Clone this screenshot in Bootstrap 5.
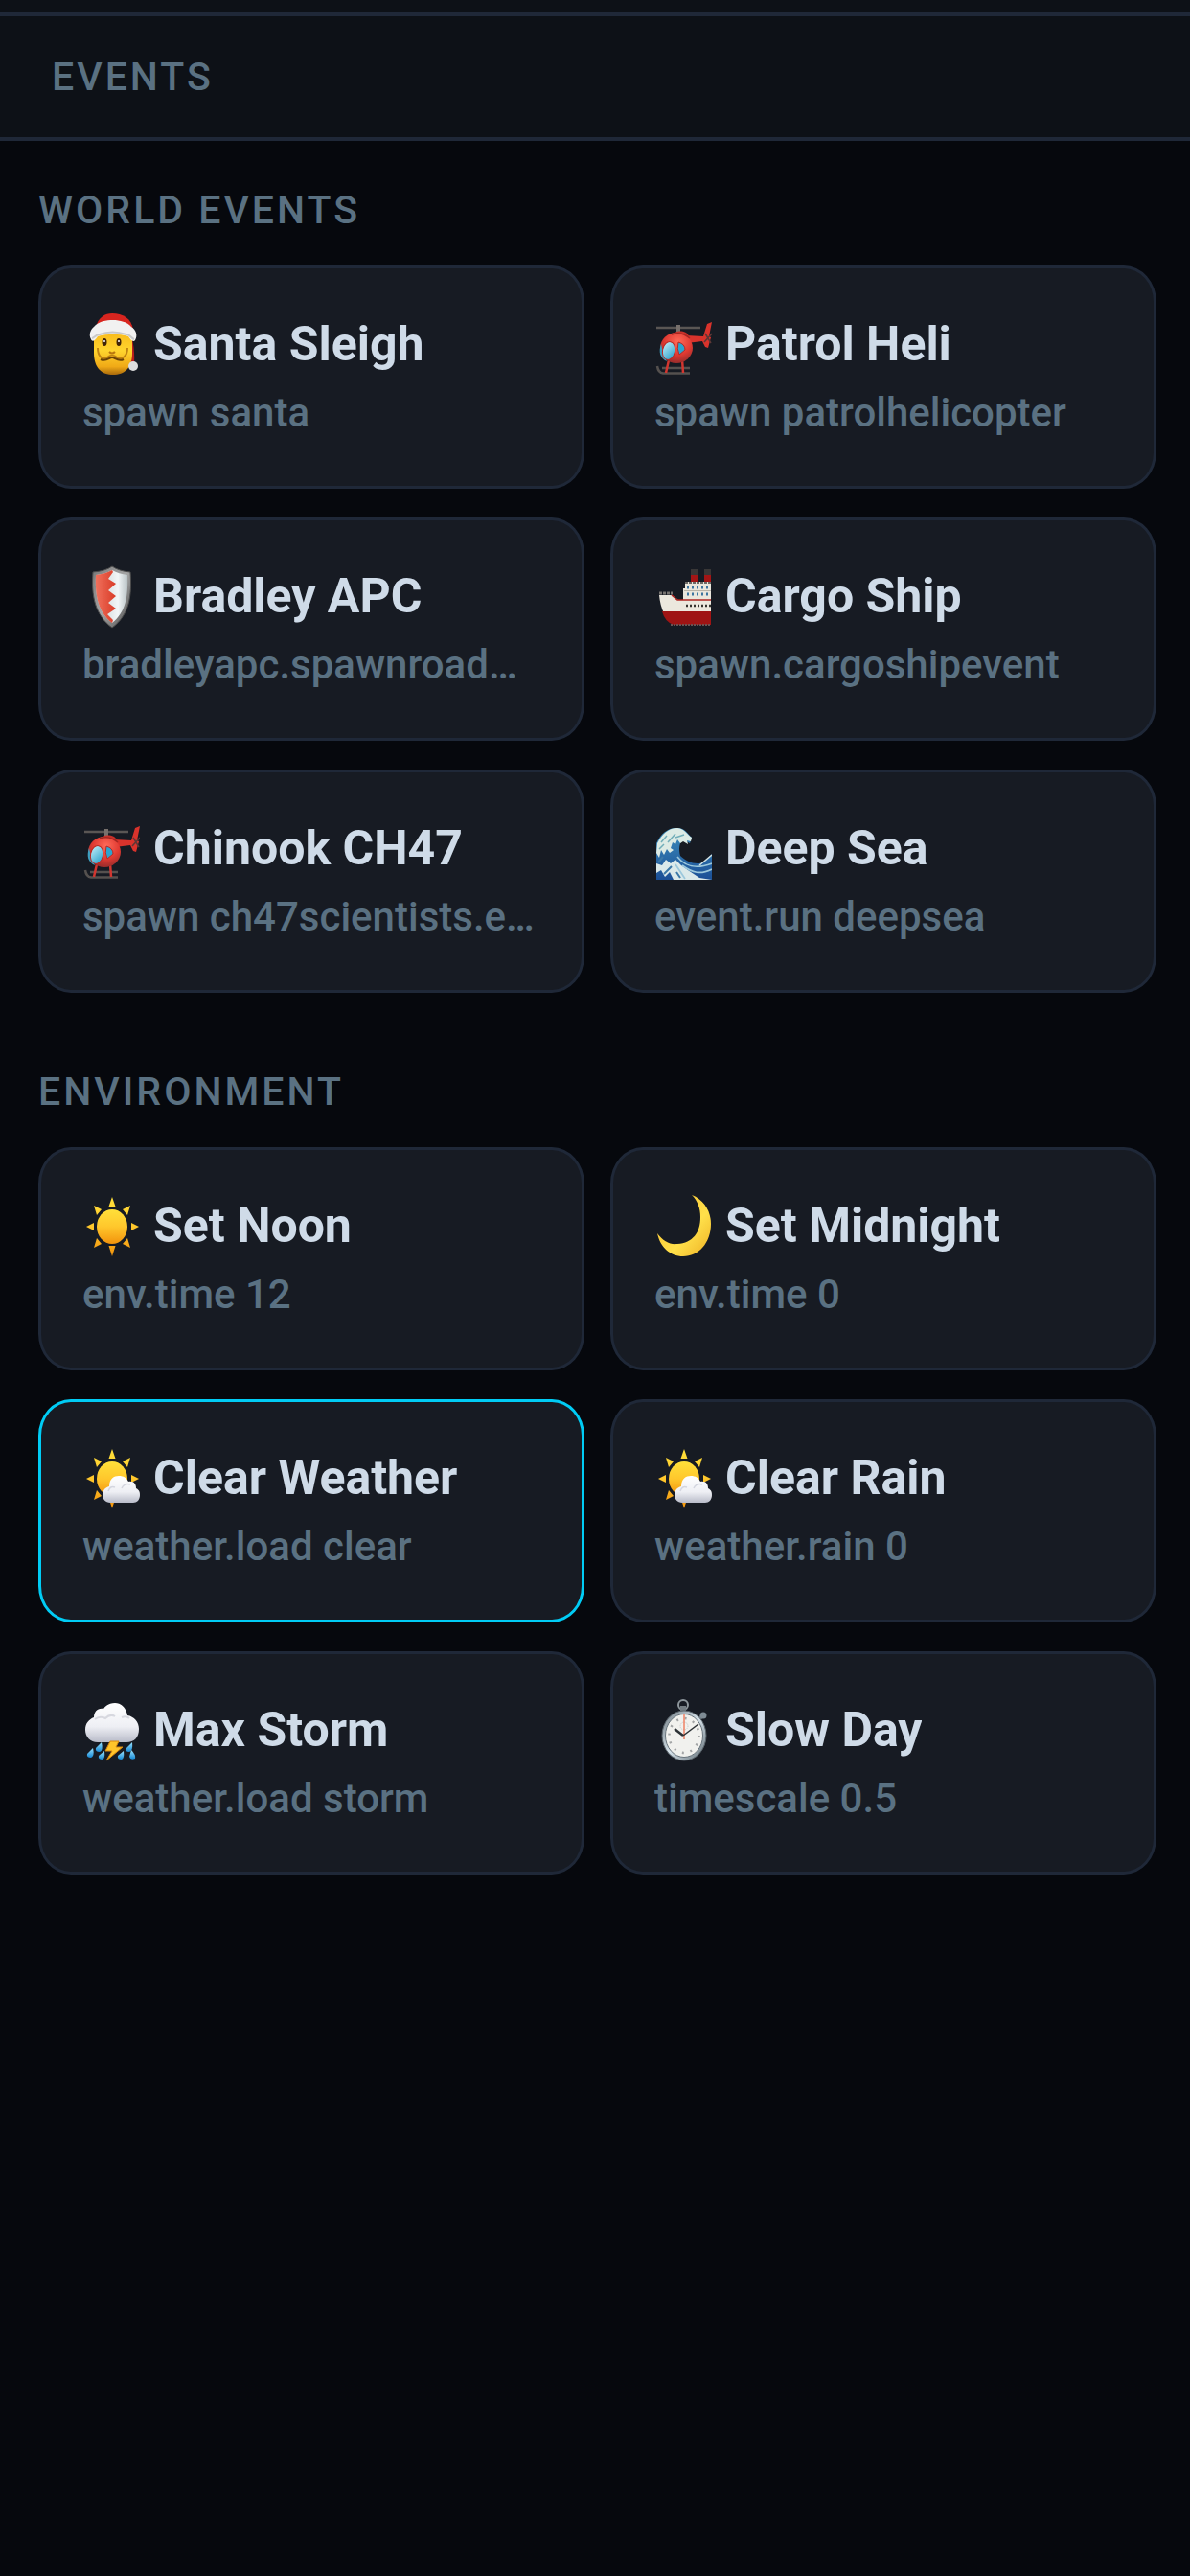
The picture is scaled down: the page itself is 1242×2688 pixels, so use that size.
<!DOCTYPE html>
<html lang="en">
<head>
<meta charset="utf-8">
<meta name="viewport" content="width=device-width, initial-scale=1">
<title>Events</title>
<link href="https://cdn.jsdelivr.net/npm/bootstrap@5.3.0/dist/css/bootstrap.min.css" rel="stylesheet">
<style>
  :root { --page: #06080d; --bar: #0d1117; --panel: #171b23; --line: #1f2838; --ink: #cfdbe8; --dim: #5a7182; --accent: #00ccf5; }
  body { background: var(--page); color: var(--ink); font-family: Roboto, "Liberation Sans", sans-serif; }
  .top-edge { height: 13px; background: var(--bar); }
  .title-bar { background: var(--bar); border-top: 4px solid var(--line); border-bottom: 4px solid var(--line); padding: 38px 54px; }
  .caps { color: var(--dim); font-size: 41px; line-height: 50px; font-weight: 500; letter-spacing: 3px; text-transform: uppercase; margin: 0; }
  .content { padding: 47px 35px 47px 40px; }
  .group + .group { margin-top: 78px; }
  .group .caps { margin-bottom: 33px; }
  .tiles { grid-template-columns: repeat(2, minmax(0, 1fr)); gap: 30px 27px; }
  .tile { background: var(--panel); border: 3px solid var(--line); border-radius: 34px / 38px; padding: 44px 43px 47px; color: var(--ink); text-align: left; }
  .tile.active { border-color: var(--accent); }
  .tile-name { gap: 14px; height: 70px; font-size: 50px; line-height: 70px; font-weight: 700; }
  .tile-name svg { width: 60px; height: 70px; flex: none; }
  .tile-cmd { color: var(--dim); font-size: 42px; line-height: 58px; font-weight: 500; margin-top: 8px; }
</style>
</head>
<body>
<svg class="position-absolute" width="0" height="0" aria-hidden="true">
  <defs>
    <linearGradient id="gSun" x1="0" y1="0" x2="0" y2="1"><stop offset="0" stop-color="#ffe03a"/><stop offset=".5" stop-color="#ffc72c"/><stop offset="1" stop-color="#f2930c"/></linearGradient>
    <linearGradient id="gFace" x1="0" y1="0" x2="0" y2="1"><stop offset="0" stop-color="#f9bd1d"/><stop offset=".4" stop-color="#ffd42e"/><stop offset=".8" stop-color="#f0a916"/><stop offset="1" stop-color="#a8690c"/></linearGradient>
    <radialGradient id="gHeli" cx=".55" cy=".3" r=".75"><stop offset="0" stop-color="#ff6a58"/><stop offset=".55" stop-color="#e03a32"/><stop offset="1" stop-color="#8e2a2a"/></radialGradient>
    <linearGradient id="gGlass" x1="0" y1="0" x2="1" y2="1"><stop offset="0" stop-color="#c9f2fb"/><stop offset="1" stop-color="#1f9cc7"/></linearGradient>
    <linearGradient id="gSteel" x1="0" y1="0" x2="1" y2="1"><stop offset="0" stop-color="#777"/><stop offset=".5" stop-color="#a5a5a5"/><stop offset="1" stop-color="#4c4c4c"/></linearGradient>
    <linearGradient id="gWhite" x1="0" y1="0" x2="1" y2="0"><stop offset="0" stop-color="#c4cacc"/><stop offset=".7" stop-color="#f2f6f7"/><stop offset="1" stop-color="#b9c2c5"/></linearGradient>
    <linearGradient id="gRed" x1="0" y1="0" x2="1" y2="0"><stop offset="0" stop-color="#f0705c"/><stop offset="1" stop-color="#d93c28"/></linearGradient>
    <linearGradient id="gCloud" x1="0" y1="0" x2="0" y2="1"><stop offset="0" stop-color="#ffffff"/><stop offset=".6" stop-color="#eeeff4"/><stop offset="1" stop-color="#b9bcc9"/></linearGradient>
    <linearGradient id="gDrop" x1="0" y1="0" x2="0" y2="1"><stop offset="0" stop-color="#9be4ff"/><stop offset="1" stop-color="#1487d4"/></linearGradient>
    <linearGradient id="gMoon" x1="0" y1="0" x2="1" y2="1"><stop offset="0" stop-color="#f6b92a"/><stop offset=".6" stop-color="#ffe04a"/><stop offset="1" stop-color="#eeb024"/></linearGradient>
    <linearGradient id="gWave" x1="0" y1="0" x2="0" y2="1"><stop offset="0" stop-color="#3d8fbd"/><stop offset="1" stop-color="#1b4f96"/></linearGradient>
    <linearGradient id="gRim" x1="0" y1="0" x2="1" y2="1"><stop offset="0" stop-color="#6d7880"/><stop offset=".5" stop-color="#d6e2ea"/><stop offset="1" stop-color="#5b6870"/></linearGradient>
  </defs>

  <symbol id="santa" viewBox="0 0 60 70">
    <path d="M46 16C52 24 55 40 54 56L49 56 46 30Z" fill="#b81d1b"/>
    <path d="M12 25H52V44C52 60 44 67 32 67S12 60 12 44Z" fill="url(#gFace)"/>
    <path d="M14 18C16 7 24 3 31 3 42 3 51 8 53 20Z" fill="#d8251f"/>
    <path d="M9 30C6 25 9 19 12 17 17 11 25 10 32 10S47 12 51 17C56 20 58 26 55 31 53 34 50 30 48 27 38 24 26 24 16 27 13 32 10 33 9 30Z" fill="#f1f1f1"/>
    <path d="M10 29C13 28 14 25 18 25 28 21 37 22 46 25 50 25 51 29 54 30" fill="none" stroke="#c9c9c9" stroke-width="2"/>
    <ellipse cx="23" cy="33" rx="2.5" ry="4" fill="#402308"/><ellipse cx="38" cy="33" rx="2.5" ry="4" fill="#402308"/>
    <circle cx="23" cy="32" r="1" fill="#fff"/><circle cx="38" cy="32" r="1" fill="#fff"/>
    <path d="M28 43Q31 46 34 43" fill="none" stroke="#b9770e" stroke-width="2"/>
    <path d="M16 39C16 48 21 52 26 49 29 46 33 46 36 49 42 52 47 47 47 39" fill="none" stroke="#c08312" stroke-width="2"/>
    <path d="M19 51C25 54 28 49 31 49S37 54 43 51" fill="none" stroke="#6b4206" stroke-width="2"/>
    <ellipse cx="53" cy="58" rx="5" ry="5" fill="#dedede"/>
  </symbol>

  <symbol id="heli" viewBox="0 0 60 70">
    <path d="M2 18H48" stroke="#5a5654" stroke-width="2.5"/>
    <path d="M25 15V25" stroke="#77706c" stroke-width="4"/>
    <path d="M8 60H37M3 58Q4 65 9 65.500H37" fill="none" stroke="#55514f" stroke-width="2.500"/>
    <path d="M15 52 12 65M29 51 30 65" stroke="#d2362f" stroke-width="2.500"/>
    <path d="M33 26 51 27 55 14 60 12 57 27 59 28 56 39 53 38 50 32 34 34Z" fill="#d9332c"/>
    <path d="M52 33 60 24M53 24 59 34" stroke="#5d3836" stroke-width="1.500"/>
    <path d="M20 25C21 20 34 20 36 27Z" fill="#c93029"/>
    <ellipse cx="23" cy="39" rx="17" ry="16" fill="url(#gHeli)"/>
    <path d="M18 25Q28 21 37 29" fill="none" stroke="#a32722" stroke-width="1.500"/>
    <path d="M7 35C4 43 6 50 13 53L9 44Z" fill="#3c9fc0"/>
    <ellipse cx="15" cy="42" rx="6.500" ry="9.500" transform="rotate(12 15 42)" fill="url(#gGlass)" stroke="#b92822"/>
    <path d="M25 33Q32 35 32 41L26 46Q23 40 25 33Z" fill="#2aa4cf" stroke="#b92822"/>
  </symbol>

  <symbol id="shield" viewBox="0 0 60 70">
    <path d="M31 4Q38 9 50 10C52 34 49 55 31 68 13 55 9 34 11 10Q24 9 31 4Z" fill="url(#gSteel)" stroke="#4b4b4b"/>
    <path d="M31 8Q38 12 47 13C48 36 45 52 31 63 17 52 13 36 14 13Q24 12 31 8Z" fill="url(#gWhite)"/>
    <path d="M31 8Q24 12 14 13C13 36 17 52 31 63L32 60 26 54 35 48 27 42 35 35 27 29 35 22 27 17 32 10Z" fill="url(#gRed)"/>
  </symbol>

  <symbol id="ship" viewBox="0 0 60 70">
    <path d="M38 12H46V21H38ZM52 12H59V21H52Z" fill="#a31515"/>
    <path d="M38 7H46V13H38ZM52 7H59V13H52Z" fill="#393737"/>
    <path d="M32 20H59V42H30V27H32Z" fill="#e9e6dc"/>
    <path d="M32 21H59" stroke="#6b6a66" stroke-width="2" stroke-dasharray="3 1"/>
    <path d="M34 26H59M34 33H59" stroke="#3c759f" stroke-width="3" stroke-dasharray="2 3"/>
    <path d="M31 29.500H59" stroke="#b9b4a8"/>
    <path d="M5 34H18L25 39H59V53H10Q6 45 5 34Z" fill="#ece8de"/>
    <path d="M5 32H19" stroke="#777370" stroke-width="3" stroke-dasharray="3 1"/>
    <path d="M18 34 24 39H59" fill="none" stroke="#b02420" stroke-width="1.500"/>
    <path d="M33 45H59" stroke="#35332f" stroke-width="2.500" stroke-dasharray="2 2"/>
    <path d="M8 51H59V65H20Q11 62 8 51Z" fill="#9f1414"/>
    <path d="M17 65H59" stroke="#6a5252" stroke-width="2" stroke-dasharray="2 1"/>
  </symbol>

  <symbol id="wave" viewBox="0 0 60 70">
    <path d="M2 30C7 19 15 13 25 14 33 15 35 21 39 24L37 30 30 26C26 29 25 36 27 43 33 49 45 54 52 49L60 41V68H2Z" fill="url(#gWave)"/>
    <path d="M3 30C8 20 15 14 24 14 32 15 34 21 39 24L38 28 34 27 35 31 30 28 27 30 24 26 22 31 19 29 17 35 20 37 16 40 13 36 10 42 7 37 5 45 2 40Z" fill="#dcebe5"/>
    <path d="M7 29 13 22M14 29 22 20M22 24 31 21M5 36 10 31" stroke="#71aeb9" stroke-width="1.500"/>
    <path d="M2 51 8 53 12 47 17 51 22 47 28 53 35 58 47 66 60 68H20L16 60 11 65 7 58 2 61Z" fill="#dbe9ea"/>
    <path d="M24 44C31 53 41 58 60 51M29 53C40 61 48 63 60 57M22 52 32 67" fill="none" stroke="#9cc8dc" stroke-width="1.700"/>
    <path d="M4 50 9 44M10 62 18 54M23 60 27 66" stroke="#3b78a8" stroke-width="2"/>
    <path d="M47 53 60 42" stroke="#d2e2e2" stroke-width="1.500"/>
  </symbol>

  <symbol id="sun" viewBox="0 0 60 70">
    <path d="M31 5 34.500 15H27.500ZM31 67 27.500 56H34.500ZM4 36 12 32V40ZM59 36 51 32V40ZM12 14 20 18 15 24ZM50 14 42 18 47 24ZM12 58 20 54 15 48ZM50 58 42 54 47 48Z" fill="url(#gSun)"/>
    <ellipse cx="31" cy="36" rx="16" ry="18" fill="url(#gSun)"/>
  </symbol>

  <symbol id="suncloud" viewBox="0 0 60 70">
    <use href="#sun"/>
    <path d="M29 61C24 61 21 57 21 53 21 48 24 45 28 44 28 36 33 33 38 33 43 33 46 35 48 39 54 38 56 42 56 46 60 48 60 51 60 53 60 58 57 61 53 61Z" fill="url(#gCloud)"/>
    <path d="M27 49Q29 43 34 45M41 46Q44 40 50 42" fill="none" stroke="#d4d6df" stroke-width="1.500"/>
  </symbol>

  <symbol id="moon" viewBox="0 0 60 70">
    <path d="M39 3C52 8 59 20 59 33 59 53 46 67 30 67 16 67 6 57 3 43 9 51 16 55 24 54 40 53 48 42 48 26 48 17 45 9 39 3Z" fill="url(#gMoon)"/>
  </symbol>

  <symbol id="storm" viewBox="0 0 60 70">
    <path d="M16 48C8 48 3 42 3 35 3 28 7 24 12 22 12 16 16 12 22 13 25 9 29 7 34 7 41 7 46 13 47 20 54 21 59 27 59 34 59 43 54 48 46 48Z" fill="url(#gCloud)"/>
    <path d="M13 24Q18 20 24 23 29 18 34 21M41 22Q46 20 49 23" fill="none" stroke="#d7d8df" stroke-width="2"/>
    <path d="M29 47H38L35 53H42L25 67 31 57H24Z" fill="#ffc42a" stroke="#d8860e"/>
    <g fill="url(#gDrop)">
      <path d="M11 54Q13 62 9 64 4 64 5 60Z"/><path d="M20 48Q22 57 18 58 13 58 14 54Z"/><path d="M23 57Q24 65 21 66 16 66 17 62Z"/>
      <path d="M43 57Q44 65 41 66 36 66 37 62Z"/><path d="M52 48Q53 57 49 58 44 58 46 54Z"/><path d="M51 56Q56 61 55 65 50 67 49 63Z"/>
    </g>
  </symbol>

  <symbol id="watch" viewBox="0 0 60 70">
    <ellipse cx="30" cy="9" rx="5" ry="5" fill="none" stroke="#8d969b" stroke-width="2"/>
    <path d="M27 10H33V17H27Z" fill="#737c82"/>
    <path d="M45 25 51 20" stroke="#67717a" stroke-width="4"/><circle cx="51" cy="20" r="3.500" fill="#7e8b94"/>
    <ellipse cx="31" cy="41" rx="23" ry="26" fill="url(#gRim)" stroke="#59636a"/>
    <ellipse cx="31" cy="41" rx="19.500" ry="22.500" fill="#f1f1ee" stroke="#68747c"/>
    <ellipse cx="31" cy="41" rx="15.500" ry="18" fill="none" stroke="#a3a5a6" stroke-width="2.500" stroke-dasharray="2 6.800"/>
    <circle cx="31" cy="31" r="4" fill="none" stroke="#c3c5c6" stroke-dasharray="1 1"/>
    <path d="M31 19V45" stroke="#ef8064" stroke-width="1.500"/>
    <path d="M30 41 21 34" stroke="#2d3236" stroke-width="2.500"/><path d="M30 41 46 29" stroke="#2d3236" stroke-width="1.500"/>
  </symbol>
</svg>

<div class="top-edge"></div>
<header class="title-bar"><h1 class="caps">Events</h1></header>

<main class="content">
  <section class="group">
    <h2 class="caps">World Events</h2>
    <div class="tiles d-grid">
      <button type="button" class="tile"><span class="tile-name d-flex"><svg aria-hidden="true"><use href="#santa"/></svg><span class="text-truncate">Santa Sleigh</span></span><span class="tile-cmd d-block text-truncate">spawn santa</span></button>
      <button type="button" class="tile"><span class="tile-name d-flex"><svg aria-hidden="true"><use href="#heli"/></svg><span class="text-truncate">Patrol Heli</span></span><span class="tile-cmd d-block text-truncate">spawn patrolhelicopter</span></button>
      <button type="button" class="tile"><span class="tile-name d-flex"><svg aria-hidden="true"><use href="#shield"/></svg><span class="text-truncate">Bradley APC</span></span><span class="tile-cmd d-block text-truncate">bradleyapc.spawnroad…</span></button>
      <button type="button" class="tile"><span class="tile-name d-flex"><svg aria-hidden="true"><use href="#ship"/></svg><span class="text-truncate">Cargo Ship</span></span><span class="tile-cmd d-block text-truncate">spawn.cargoshipevent</span></button>
      <button type="button" class="tile"><span class="tile-name d-flex"><svg aria-hidden="true"><use href="#heli"/></svg><span class="text-truncate">Chinook CH47</span></span><span class="tile-cmd d-block text-truncate">spawn ch47scientists.e…</span></button>
      <button type="button" class="tile"><span class="tile-name d-flex"><svg aria-hidden="true"><use href="#wave"/></svg><span class="text-truncate">Deep Sea</span></span><span class="tile-cmd d-block text-truncate">event.run deepsea</span></button>
    </div>
  </section>

  <section class="group">
    <h2 class="caps">Environment</h2>
    <div class="tiles d-grid">
      <button type="button" class="tile"><span class="tile-name d-flex"><svg aria-hidden="true"><use href="#sun"/></svg><span class="text-truncate">Set Noon</span></span><span class="tile-cmd d-block text-truncate">env.time 12</span></button>
      <button type="button" class="tile"><span class="tile-name d-flex"><svg aria-hidden="true"><use href="#moon"/></svg><span class="text-truncate">Set Midnight</span></span><span class="tile-cmd d-block text-truncate">env.time 0</span></button>
      <button type="button" class="tile active"><span class="tile-name d-flex"><svg aria-hidden="true"><use href="#suncloud"/></svg><span class="text-truncate">Clear Weather</span></span><span class="tile-cmd d-block text-truncate">weather.load clear</span></button>
      <button type="button" class="tile"><span class="tile-name d-flex"><svg aria-hidden="true"><use href="#suncloud"/></svg><span class="text-truncate">Clear Rain</span></span><span class="tile-cmd d-block text-truncate">weather.rain 0</span></button>
      <button type="button" class="tile"><span class="tile-name d-flex"><svg aria-hidden="true"><use href="#storm"/></svg><span class="text-truncate">Max Storm</span></span><span class="tile-cmd d-block text-truncate">weather.load storm</span></button>
      <button type="button" class="tile"><span class="tile-name d-flex"><svg aria-hidden="true"><use href="#watch"/></svg><span class="text-truncate">Slow Day</span></span><span class="tile-cmd d-block text-truncate">timescale 0.5</span></button>
    </div>
  </section>
</main>
<script src="https://cdn.jsdelivr.net/npm/bootstrap@5.3.0/dist/js/bootstrap.bundle.min.js"></script>
</body>
</html>
